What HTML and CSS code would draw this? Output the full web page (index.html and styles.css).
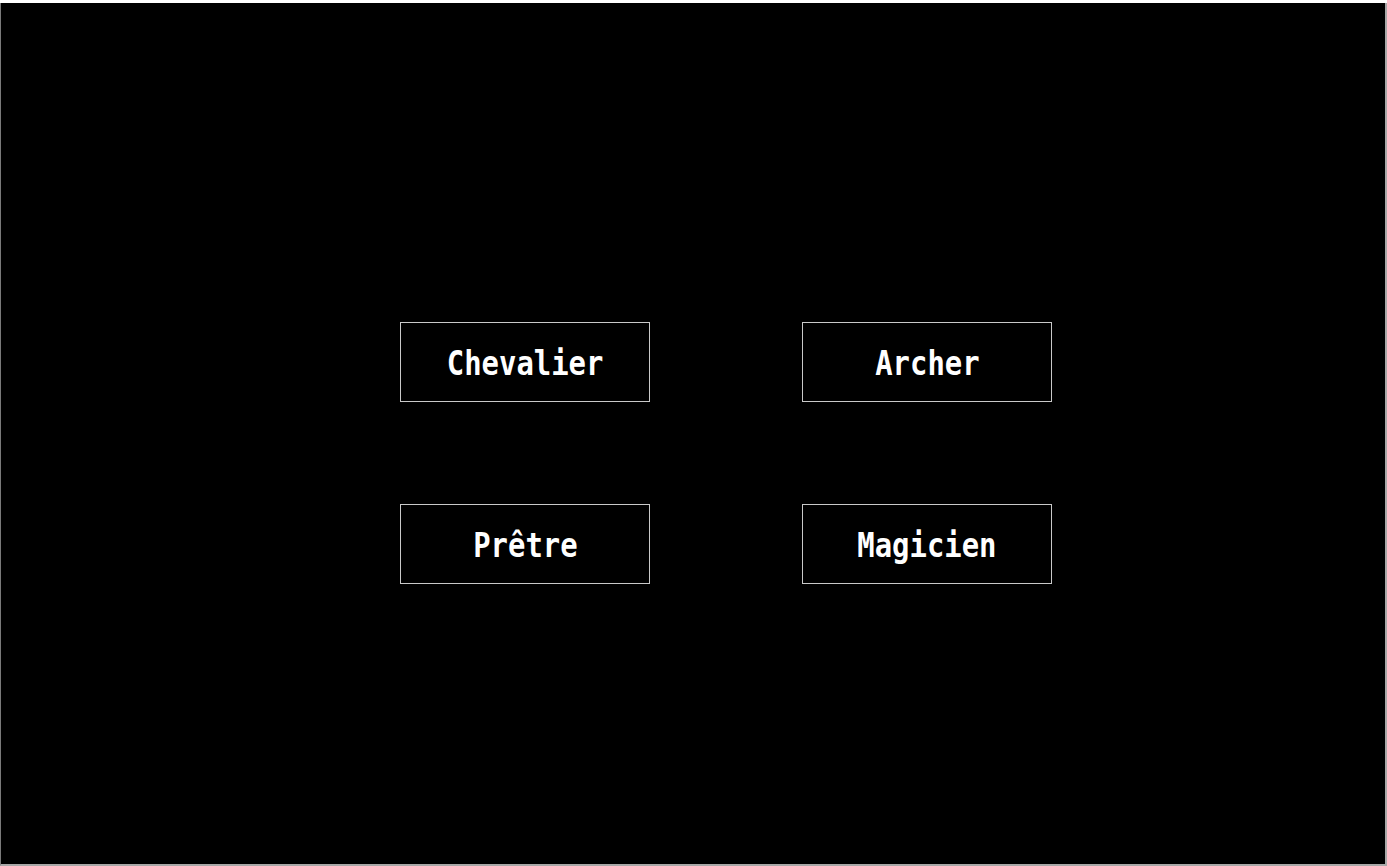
FILE: index.html
```html
<!DOCTYPE html>
<html lang="fr">
<head>
<meta charset="utf-8">
<title>Choix de classe</title>
<link rel="stylesheet" href="styles.css">
</head>
<body>
<main class="screen">
  <div class="choices">
    <button class="choice"><span class="label">Chevalier</span></button>
    <button class="choice"><span class="label">Archer</span></button>
    <button class="choice"><span class="label">Prêtre</span></button>
    <button class="choice"><span class="label">Magicien</span></button>
  </div>
</main>
</body>
</html>
```
FILE: styles.css
```css
html, body {
  margin: 0;
  padding: 0;
  background: #ffffff;
}
.screen {
  box-sizing: border-box;
  margin-top: 3px;
  width: 1387px;
  height: 863px;
  background: #000000;
  border-left: 1px solid #7a7a7a;
  border-right: 2px solid #a8a8a8;
  border-bottom: 2px solid #a8a8a8;
  padding: 319px 0 0 399px;
}
.choices {
  display: grid;
  grid-template-columns: 250px 250px;
  grid-template-rows: 80px 80px;
  column-gap: 152px;
  row-gap: 102px;
}
.choice {
  box-sizing: border-box;
  width: 250px;
  height: 80px;
  margin: 0;
  padding: 0;
  background: #000000;
  border: 1px solid #c9c9c9;
  color: #ffffff;
  display: flex;
  align-items: center;
  justify-content: center;
  font-family: "DejaVu Sans Mono", monospace;
  font-weight: bold;
  font-size: 34px;
  line-height: 1;
}
.label {
  display: inline-block;
  transform: scaleX(0.85);
  padding-top: 2px;
}
```
